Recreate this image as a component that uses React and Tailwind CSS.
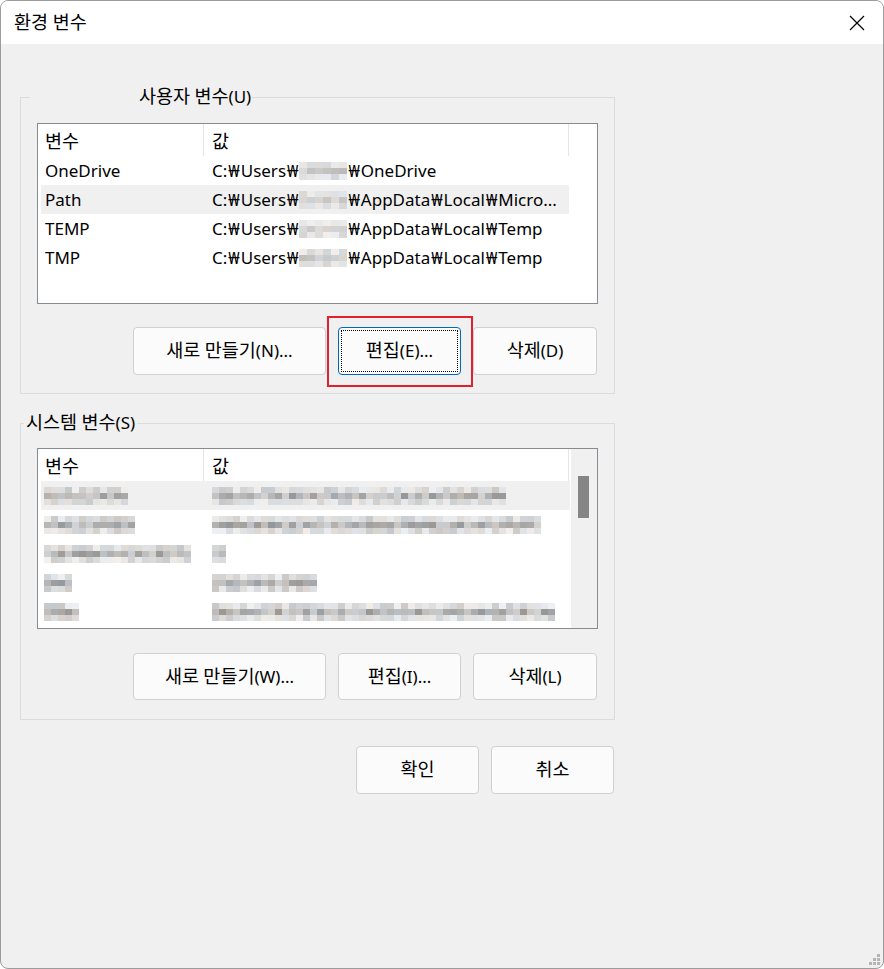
import React from 'react'

const FONT = "font-['Noto_Sans','Noto_Sans_CJK_KR',sans-serif]"

// Malgun-style: hangul runs a little larger than latin, ₩ wider than in Noto Sans
const T = ({ children, ko = 'text-[18.5px]' }) => {
  const parts = String(children).split(/([\uAC00-\uD7A3]+|₩)/)
  return (
    <>
      {parts.map((p, i) => {
        if (!p) return null
        if (p === '₩') return <span key={i} className="px-[1px]">₩</span>
        if (/[\uAC00-\uD7A3]/.test(p))
          return (
            <span key={i} className={`${ko} leading-none font-['Noto_Sans_CJK_KR',sans-serif]`}>
              {p}
            </span>
          )
        return <span key={i}>{p}</span>
      })}
    </>
  )
}

// pseudo random so the mosaic looks the same every render
const makeRand = (seed) => {
  let s = seed
  return () => {
    s = (s * 9301 + 49297) % 233280
    return s / 233280
  }
}

const Mosaic = ({ seed, cols, cell = 7, lineH = 6, light = false }) => {
  const rnd = makeRand(seed)
  const lines = [0, 1, 2]
  return (
    <span className="inline-flex flex-col align-middle">
      {lines.map((l) => (
        <span key={l} className="flex">
          {Array.from({ length: cols }).map((_, i) => {
            const r = rnd()
            let v
            if (l === 1) v = light ? 185 + r * 35 : 150 + r * 60
            else v = light ? 212 + r * 28 : 200 + r * 40
            const t = rnd() * 10 - 5
            const bg = `rgb(${Math.round(v + t)}, ${Math.round(v)}, ${Math.round(v - t)})`
            return (
              <span
                key={i}
                style={{ width: cell, height: lineH, backgroundColor: bg }}
              />
            )
          })}
        </span>
      ))}
    </span>
  )
}

const Btn = ({ children, w, h = 'h-[48px]', focused = false, marked = false }) => (
  <div className="relative">
    <button
      className={`${FONT} relative ${h} ${w} rounded-[4px] border bg-[#fbfbfb] text-[17px] leading-[24px] text-black flex items-center justify-center ${
        focused ? 'border-[#0067c0]' : 'border-[#d0d0d0]'
      }`}
    >
      {focused && (
        <span className="absolute inset-[2px] border border-dotted border-black" />
      )}
      <span><T>{children}</T></span>
    </button>
    {marked && (
      <span className="absolute -left-[11px] -top-[11px] -right-[12px] -bottom-[12px] border-2 border-[#e3202b]" />
    )}
  </div>
)

const userRows = [
  { name: 'OneDrive', tail: '₩OneDrive', seed: 11 },
  { name: 'Path', tail: '₩AppData₩Local₩Micro...', seed: 23, active: true },
  { name: 'TEMP', tail: '₩AppData₩Local₩Temp', seed: 37 },
  { name: 'TMP', tail: '₩AppData₩Local₩Temp', seed: 41 }
]

const sysRows = [
  { l: 12, r: 42, seed: 5, active: true },
  { l: 13, r: 47, seed: 17 },
  { l: 21, r: 2, seed: 29 },
  { l: 4, r: 15, seed: 53 },
  { l: 5, r: 49, seed: 71 }
]

const Header = () => (
  <div className="flex h-[32px] items-center text-[17px]">
    <div className="w-[163px] h-full pl-[4px] flex items-center border-r border-[#e5e5e5]"><T>변수</T></div>
    <div className="w-[365px] h-full pl-[8px] flex items-center border-r border-[#e5e5e5]"><T>값</T></div>
  </div>
)

const App = () => {
  return (
    <div className={`${FONT} w-[884px] h-[969px] bg-white`}>
      <div className="w-full h-full flex flex-col border border-[#9c9c9c] rounded-[8px] overflow-hidden bg-[#f0f0f0] relative">
        {/* Title bar */}
        <div className="h-[43px] bg-white flex items-center justify-between shrink-0">
          <span className="pl-[13px] text-[18px] text-black"><T ko="text-[18.5px]">환경 변수</T></span>
          <svg width="16" height="16" viewBox="0 0 16 16" className="mr-[18px]">
            <path d="M1 1 L15 15 M15 1 L1 15" stroke="#000" strokeWidth="1.2" fill="none" />
          </svg>
        </div>

        <div className="pl-[19px] flex flex-col">
          {/* User variables */}
          <fieldset className="mt-[41px] w-[595px] border border-[#dcdcdc] px-0 pb-[18px] pt-0 m-0">
            <legend className="ml-[9px] pl-[109px] pr-[1px] h-[24px] text-[17px] leading-[24px]"><T>사용자 변수(U)</T></legend>
            <div className="ml-[16px] mt-[14px] w-[561px] h-[181px] border border-[#868a91] bg-white pl-[3px] text-black">
              <Header />
              {userRows.map((row) => (
                <div
                  key={row.name}
                  className={`flex h-[29px] items-center w-[528px] text-[17px] ${row.active ? 'bg-[#f0f0f0]' : ''}`}
                >
                  <div className="w-[163px] pl-[4px] pt-[1px]">{row.name}</div>
                  <div className="pl-[8px] pt-[1px] flex items-center whitespace-nowrap">
                    <span><T>C:₩Users₩</T></span>
                    <Mosaic seed={row.seed} cols={6} cell={8} lineH={6} light />
                    <span><T>{row.tail}</T></span>
                  </div>
                </div>
              ))}
            </div>
            <div className="flex justify-end gap-[12px] pr-[17px] mt-[23px]">
              <Btn w="w-[193px]">새로 만들기(N)...</Btn>
              <Btn w="w-[123px]" focused marked>편집(E)...</Btn>
              <Btn w="w-[124px]">삭제(D)</Btn>
            </div>
          </fieldset>

          {/* System variables */}
          <fieldset className="mt-[17px] w-[595px] border border-[#dcdcdc] px-0 pb-[19px] pt-0 m-0">
            <legend className="ml-[3px] px-[2px] h-[24px] text-[17px] leading-[24px]"><T>시스템 변수(S)</T></legend>
            <div className="ml-[16px] mt-[13px] w-[561px] h-[181px] border border-[#868a91] bg-white pl-[3px] flex overflow-hidden">
              <div className="w-[529px] text-black">
                <Header />
                {sysRows.map((row, i) => (
                  <div
                    key={i}
                    className={`flex h-[29px] items-center w-[529px] ${row.active ? 'bg-[#f0f0f0]' : ''}`}
                  >
                    <div className="w-[163px] pl-[3px] flex">
                      <Mosaic seed={row.seed} cols={row.l} />
                    </div>
                    <div className="pl-[8px] flex">
                      <Mosaic seed={row.seed + 100} cols={row.r} />
                    </div>
                  </div>
                ))}
              </div>
              <div className="flex-1 bg-[#f0f0f0] ml-[1px] pt-[27px] pl-[7px]">
                <div className="w-[11px] h-[42px] bg-[#858585]" />
              </div>
            </div>
            <div className="flex justify-end gap-[12px] pr-[17px] mt-[24px]">
              <Btn w="w-[193px]" h="h-[47px]">새로 만들기(W)...</Btn>
              <Btn w="w-[123px]" h="h-[47px]">편집(I)...</Btn>
              <Btn w="w-[124px]" h="h-[47px]">삭제(L)</Btn>
            </div>
          </fieldset>

          {/* OK / Cancel */}
          <div className="w-[595px] flex justify-end gap-[12px] pr-[1px] mt-[26px]">
            <Btn w="w-[123px]">확인</Btn>
            <Btn w="w-[123px]">취소</Btn>
          </div>
        </div>

        {/* resize grip */}
        <div className="absolute right-[3px] bottom-[3px] grid grid-cols-3 gap-[1px]">
          <span className="w-[3px] h-[3px]" />
          <span className="w-[3px] h-[3px]" />
          <span className="w-[3px] h-[3px] bg-[#b5b5b5]" />
          <span className="w-[3px] h-[3px]" />
          <span className="w-[3px] h-[3px] bg-[#b5b5b5]" />
          <span className="w-[3px] h-[3px] bg-[#b5b5b5]" />
          <span className="w-[3px] h-[3px] bg-[#b5b5b5]" />
          <span className="w-[3px] h-[3px] bg-[#b5b5b5]" />
          <span className="w-[3px] h-[3px] bg-[#b5b5b5]" />
        </div>
      </div>
    </div>
  )
}

export default App
